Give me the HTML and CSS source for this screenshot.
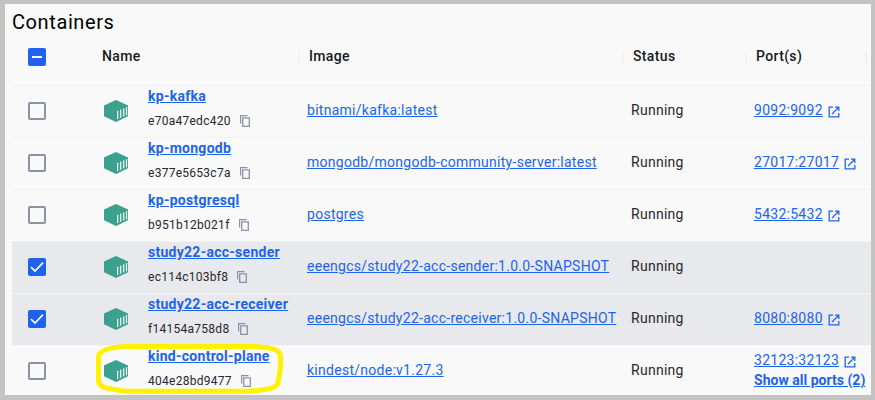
FILE: index.html
```html
<!DOCTYPE html>
<html lang="en">
<head>
<meta charset="utf-8">
<title>Containers</title>
<link rel="stylesheet" href="styles.css">
</head>
<body>
<svg class="defs" aria-hidden="true">
  <symbol id="box" viewBox="0 0 24 22">
    <path d="M12 0 24 5.5V16.200L12 22 0 16.200V5.500Z" fill="#3ba08d"/>
    <path d="M13.700 10.700V19M16.700 9.500V17.800M19.700 8.200V16.500M22.500 7V15.200" stroke="#e4f3f0" stroke-width="1.300"/>
  </symbol>
  <symbol id="copy" viewBox="0 0 10 12">
    <path d="M.6 8.500V.6H7.500" fill="none" stroke="#8993a5" stroke-width="1.200"/>
    <path d="M2.700 2.800H9.300V11.300H2.700Z" fill="none" stroke="#8993a5" stroke-width="1.300"/>
  </symbol>
  <symbol id="open" viewBox="0 0 12 12">
    <path d="M5 1.200H1.200V10.800H10.800V7M7 1.200H10.800V5M10.500 1.500 4 8" fill="none" stroke="#1d63ed" stroke-width="1.300"/>
  </symbol>
  <symbol id="tick" viewBox="0 0 18 18">
    <path d="M3 9.200 7 13 15 4.700" fill="none" stroke="#fff" stroke-width="1.700"/>
  </symbol>
</svg>
<main class="panel">
  <h1>Containers</h1>
  <div class="table">
    <div class="row head">
      <div class="select"><span class="check on"><i class="dash"></i></span></div>
      <div class="th name-th">Name</div>
      <div class="th">Image</div>
      <div class="th">Status</div>
      <div class="th last">Port(s)</div>
    </div>
    <div class="row">
      <div class="select"><span class="check"></span></div>
      <svg class="box"><use href="#box"/></svg>
      <div class="name"><a class="title">kp-kafka</a><div class="id"><span>e70a47edc420</span><svg class="copy"><use href="#copy"/></svg></div></div>
      <div><a>bitnami/kafka:latest</a></div>
      <div>Running</div>
      <div class="port"><a>9092:9092</a><svg class="open"><use href="#open"/></svg></div>
    </div>
    <div class="row">
      <div class="select"><span class="check"></span></div>
      <svg class="box"><use href="#box"/></svg>
      <div class="name"><a class="title">kp-mongodb</a><div class="id"><span>e377e5653c7a</span><svg class="copy"><use href="#copy"/></svg></div></div>
      <div><a>mongodb/mongodb-community-server:latest</a></div>
      <div>Running</div>
      <div class="port"><a>27017:27017</a><svg class="open"><use href="#open"/></svg></div>
    </div>
    <div class="row">
      <div class="select"><span class="check"></span></div>
      <svg class="box"><use href="#box"/></svg>
      <div class="name"><a class="title">kp-postgresql</a><div class="id"><span>b951b12b021f</span><svg class="copy"><use href="#copy"/></svg></div></div>
      <div><a>postgres</a></div>
      <div>Running</div>
      <div class="port"><a>5432:5432</a><svg class="open"><use href="#open"/></svg></div>
    </div>
    <div class="row selected">
      <div class="select"><span class="check on"><svg><use href="#tick"/></svg></span></div>
      <svg class="box"><use href="#box"/></svg>
      <div class="name"><a class="title">study22-acc-sender</a><div class="id"><span>ec114c103bf8</span><svg class="copy"><use href="#copy"/></svg></div></div>
      <div><a>eeengcs/study22-acc-sender:1.0.0-SNAPSHOT</a></div>
      <div>Running</div>
      <div></div>
    </div>
    <div class="row selected">
      <div class="select"><span class="check on"><svg><use href="#tick"/></svg></span></div>
      <svg class="box"><use href="#box"/></svg>
      <div class="name"><a class="title">study22-acc-receiver</a><div class="id"><span>f14154a758d8</span><svg class="copy"><use href="#copy"/></svg></div></div>
      <div><a>eeengcs/study22-acc-receiver:1.0.0-SNAPSHOT</a></div>
      <div>Running</div>
      <div class="port"><a>8080:8080</a><svg class="open"><use href="#open"/></svg></div>
    </div>
    <div class="row">
      <div class="select"><span class="check"></span></div>
      <svg class="box"><use href="#box"/></svg>
      <div class="name"><a class="title">kind-control-plane</a><div class="id"><span>404e28bd9477</span><svg class="copy"><use href="#copy"/></svg></div></div>
      <div><a>kindest/node:v1.27.3</a></div>
      <div>Running</div>
      <div class="ports"><div class="port"><a>32123:32123</a><svg class="open"><use href="#open"/></svg></div><a class="all">Show all ports (2)</a></div>
    </div>
  </div>
</main>
<svg class="marker" viewBox="0 0 190 52" aria-hidden="true">
  <path d="M31 3.500C20 4 4 5.500 3.500 14V38C4 45 14 46 31 48.300H154C170 46.500 183 46 183.500 38L185.500 24V14C185.500 6 178 5 160 3.500Z"/>
</svg>
</body>
</html>
```
FILE: styles.css
```css
* { box-sizing: border-box; }

body {
  margin: 0;
  height: 400px;
  padding: 4px 4px 5px 5px;
  background: #c3c3c3;
  color: #27282b;
  font: 14px/20px Roboto, sans-serif;
  letter-spacing: 0.27px;
  overflow: hidden;
}

.defs { position: absolute; width: 0; height: 0; }

.panel {
  height: 391px;
  padding-left: 7px;
  background: #f9f9fa;
  overflow: hidden;
}

h1 {
  margin: 0;
  height: 25px;
  padding-top: 5px;
  color: #000;
  font-size: 20px;
  line-height: 26px;
  font-weight: 400;
  letter-spacing: 0.6px;
}

.row {
  display: grid;
  grid-template-columns: 92px 44px 159px 324px 123px 1fr;
  align-items: center;
  height: 52px;
  padding-bottom: 3px;
  border-bottom: 1px solid #f2f2f4;
  white-space: nowrap;
}

.row.head {
  grid-template-columns: 90px 198px 324px 123px 1fr;
  height: 57px;
  padding-bottom: 0;
}

.selected { background: #e8e9ed; border-color: #f5f5f7; }

.select { padding-left: 16px; }

.row:not(.head) .select, .box { position: relative; top: 0.5px; }

.head .select { padding-bottom: 1px; }

.check {
  display: block;
  width: 18px;
  height: 18px;
  border: 2px solid #8993a5;
  border-radius: 2px;
}

.check.on {
  display: grid;
  place-items: center;
  border: 0;
  background: #1d63ed;
}

.check svg { width: 18px; height: 18px; }

.dash { width: 10px; height: 2px; background: #fff; }

.th {
  height: 14px;
  border-right: 2px solid #f2f2f4;
  color: #17191e;
  font-weight: 500;
  line-height: 12px;
  letter-spacing: 0.35px;
}

.th:not(.name-th) { padding-left: 9px; }

.th.last { margin-right: 4px; }

.box { width: 24px; height: 22px; }

a {
  color: #1d63ed;
  text-decoration: underline;
}

.name { align-self: start; }

.title {
  display: block;
  width: max-content;
  font-weight: 700;
}

.id {
  display: flex;
  align-items: center;
  gap: 9px;
  height: 20px;
  margin-top: 5px;
  font-size: 12px;
}

.copy { width: 10px; height: 12px; }

.port { display: flex; align-items: center; gap: 5px; }

.open { width: 12px; height: 12px; margin-top: 3px; }

.all { display: block; font-weight: 700; letter-spacing: 0.02px; }

.marker {
  position: absolute;
  left: 95px;
  top: 343px;
  width: 190px;
  height: 52px;
}

.marker path { fill: none; stroke: #fff200; stroke-width: 5; }
```
